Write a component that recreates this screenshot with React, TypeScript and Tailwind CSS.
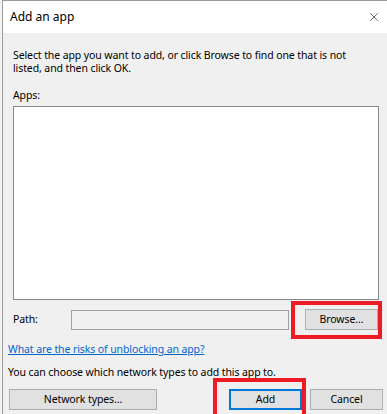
import { X } from 'lucide-react'

function WinButton({ label, focused = false, className = '' }: { label: string; focused?: boolean; className?: string }) {
  return (
    <div
      className={`h-[21px] flex items-center justify-center bg-[#e1e1e1] text-black ${
        focused ? 'border-2 border-[#0078d7]' : 'border border-[#adadad]'
      } ${className}`}
    >
      {label}
    </div>
  )
}

export default function App() {
  return (
    <div
      className="relative w-[387px] h-[414px] overflow-hidden bg-white flex"
      style={{ fontFamily: '"Noto Sans", "Open Sans", sans-serif' }}
    >
      {/* sliver of whatever is behind the dialog */}
      <div className="w-[2px] shrink-0 bg-[#f3f3f3]" />

      <div className="flex-1 flex flex-col border-l border-t border-[#9a9a9a]">
        {/* title bar */}
        <div className="h-[32px] shrink-0 bg-white flex items-center justify-between pl-[7px] pr-[6px]">
          <span className="text-[12px] text-black">Add an app</span>
          <X size={14} strokeWidth={1} className="text-black" />
        </div>

        {/* body */}
        <div className="flex-1 bg-[#f0f0f0] flex flex-col text-[10.5px] tracking-[-0.1px] text-black">
          <p className="mt-[16px] ml-[10px] w-[350px] leading-[13px]">
            Select the app you want to add, or click Browse to find one that is not listed, and then click OK.
          </p>
          <p className="mt-[14px] pl-[10px] leading-[13px]">Apps:</p>
          <div className="mt-[4px] ml-[10px] mr-[8px] h-[194px] bg-white border border-[#828790]" />

          <div className="mt-[9px] pl-[10px] pr-[9px] flex items-center">
            <span className="w-[58px]">Path:</span>
            <div className="w-[218px] h-[20px] bg-[#f0f0f0] border border-[#a0a0a0]" />
            <WinButton label="Browse..." className="ml-auto w-[73px] h-[20px]" />
          </div>

          <a className="mt-[13px] pl-[5px] leading-[13px] text-[#0066cc] underline w-max">
            What are the risks of unblocking an app?
          </a>
          <p className="mt-[10px] pl-[5px] leading-[13px]">You can choose which network types to add this app to.</p>

          <div className="mt-[10px] pl-[6px] pr-[4px] flex items-center">
            <WinButton label="Network types..." className="w-[148px]" />
            <WinButton label="Add" focused className="ml-auto w-[73px]" />
            <WinButton label="Cancel" className="ml-[8px] w-[73px]" />
          </div>
        </div>
      </div>

      {/* red annotation boxes */}
      <div className="absolute left-[291px] top-[301px] w-[91px] h-[38px] border-4 border-[#ed1c24]" />
      <div className="absolute left-[213px] top-[378px] w-[93px] h-[40px] border-4 border-[#ed1c24]" />
    </div>
  )
}
